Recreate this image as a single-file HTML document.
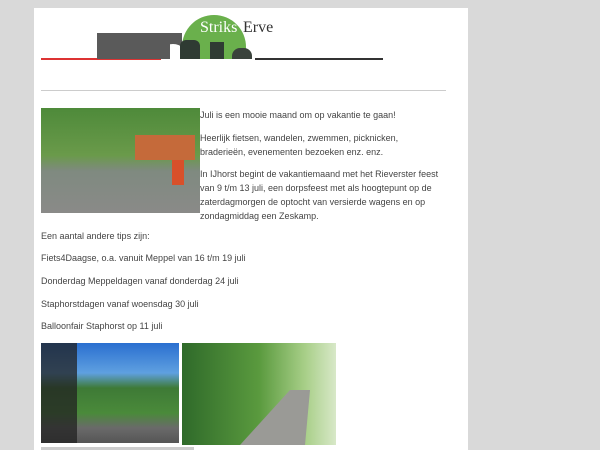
<!DOCTYPE html>
<html><head><style>
body{margin:0;width:600px;height:450px;background:#d9d9d9;overflow:hidden;font-family:"Liberation Sans",sans-serif;}
.p{position:absolute;left:34px;top:8px;width:434px;height:442px;background:#fff;}
.t{position:absolute;font-size:9px;color:#444;white-space:nowrap;}
</style></head><body>
<div class="p"></div>
<div style="position:absolute;left:41px;top:58px;width:120px;height:1.5px;background:#d33"></div>
<div style="position:absolute;left:97px;top:33px;width:85px;height:26px;background:#5a5a5a"></div>
<div style="position:absolute;left:255px;top:58px;width:128px;height:1.5px;background:#333"></div>
<div style="position:absolute;left:170px;top:14px;width:90px;height:45px;overflow:hidden">
 <div style="position:absolute;left:12px;top:1px;width:64px;height:64px;border-radius:50%;background:#6ab04c"></div>
 <div style="position:absolute;left:-12px;top:30px;width:30px;height:30px;border-radius:50%;background:#fff"></div>
 <div style="position:absolute;left:10px;top:26px;width:20px;height:22px;background:#2f3b33;border-radius:6px 6px 0 0"></div>
 <div style="position:absolute;left:40px;top:28px;width:14px;height:20px;background:#2f3b33"></div>
 <div style="position:absolute;left:62px;top:34px;width:20px;height:14px;background:#3a433c;border-radius:8px 8px 0 0"></div>
</div>
<div style="position:absolute;left:200px;top:19px;font-family:'Liberation Serif',serif;font-size:16px;color:#fff">Striks</div>
<div style="position:absolute;left:243px;top:19px;font-family:'Liberation Serif',serif;font-size:16px;color:#333">Erve</div>
<div style="position:absolute;left:41px;top:90px;width:405px;height:1px;background:#ccc"></div>
<div style="position:absolute;left:41px;top:108px;width:159px;height:105px;background:linear-gradient(180deg,#4e8a3a 0%,#6a9a4a 45%,#7f8a80 60%,#8a8a88 100%)"></div>
<div style="position:absolute;left:135px;top:135px;width:60px;height:25px;background:#c56a3a"></div>
<div style="position:absolute;left:172px;top:160px;width:12px;height:25px;background:#d8502a"></div>
<div class="t" style="left:200px;top:110px">Juli is een mooie maand om op vakantie te gaan!</div>
<div class="t" style="left:200px;top:131px;line-height:14px">Heerlijk fietsen, wandelen, zwemmen, picknicken,<br>braderieën, evenementen bezoeken enz. enz.</div>
<div class="t" style="left:200px;top:167px;line-height:14px">In IJhorst begint de vakantiemaand met het Rieverster feest<br>van 9 t/m 13 juli, een dorpsfeest met als hoogtepunt op de<br>zaterdagmorgen de optocht van versierde wagens en op<br>zondagmiddag een Zeskamp.</div>
<div class="t" style="left:41px;top:231px">Een aantal andere tips zijn:</div>
<div class="t" style="left:41px;top:253px">Fiets4Daagse, o.a. vanuit Meppel van 16 t/m 19 juli</div>
<div class="t" style="left:41px;top:276px">Donderdag Meppeldagen vanaf donderdag 24 juli</div>
<div class="t" style="left:41px;top:299px">Staphorstdagen vanaf woensdag 30 juli</div>
<div class="t" style="left:41px;top:321px">Balloonfair Staphorst op 11 juli</div>
<div style="position:absolute;left:41px;top:343px;width:138px;height:100px;background:linear-gradient(180deg,#2a6fd0 0%,#5fa0e0 30%,#3e7a36 45%,#4a8a3a 70%,#6a6a6a 85%,#555 100%)"></div>
<div style="position:absolute;left:41px;top:343px;width:36px;height:100px;background:#222;opacity:.75"></div>
<div style="position:absolute;left:182px;top:343px;width:154px;height:102px;background:linear-gradient(90deg,#2f6a2a 0%,#5a9a3e 50%,#a8cf88 80%,#d8e8c8 100%)"></div>
<div style="position:absolute;left:230px;top:390px;width:100px;height:55px;background:#9a9a96;clip-path:polygon(60% 0,80% 0,75% 100%,10% 100%)"></div>
<div style="position:absolute;left:41px;top:447px;width:153px;height:3px;background:#ccc"></div>
</body></html>
